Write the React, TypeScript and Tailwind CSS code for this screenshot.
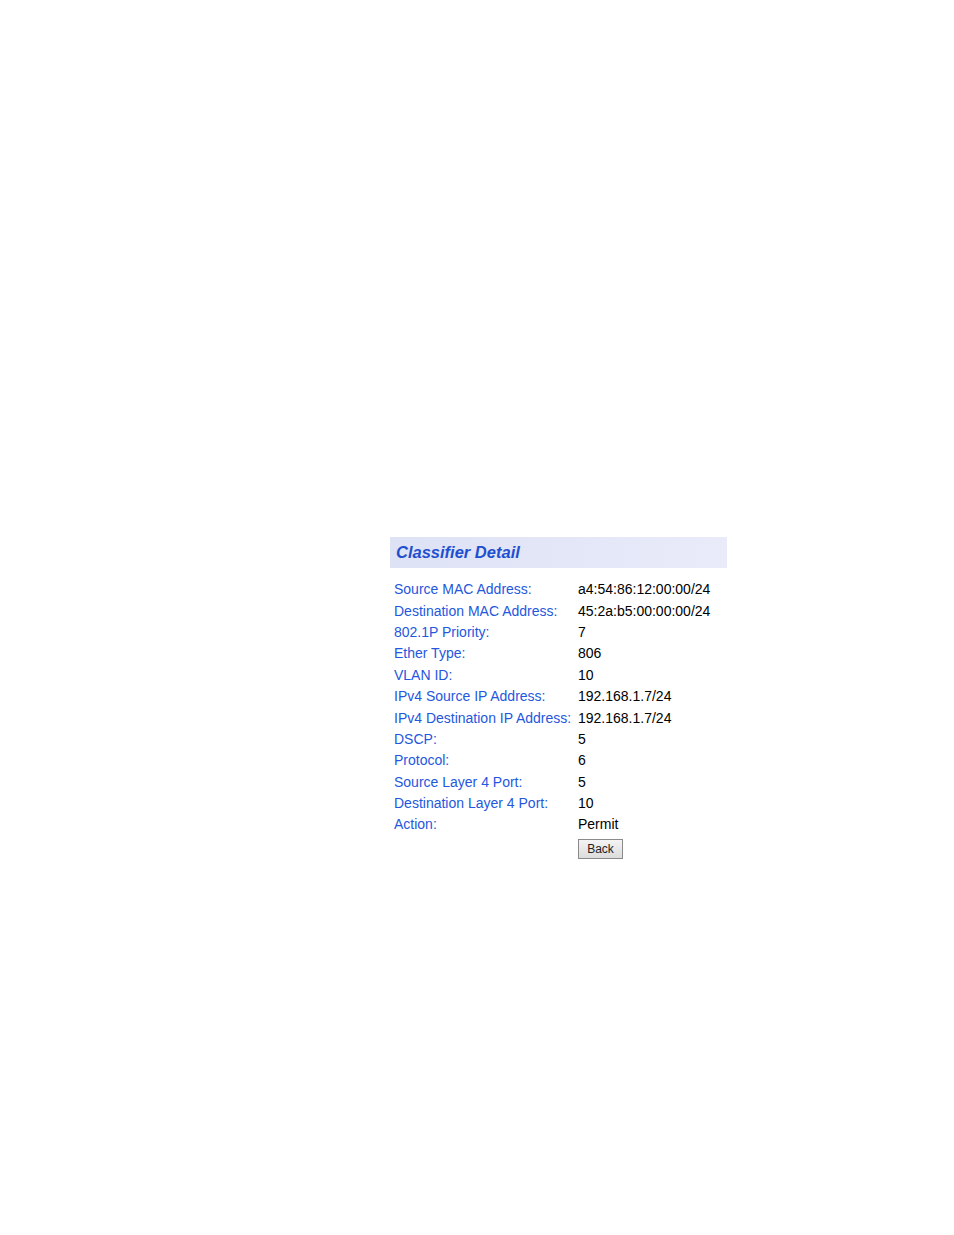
const rows: [string, string][] = [
  ['Source MAC Address:', 'a4:54:86:12:00:00/24'],
  ['Destination MAC Address:', '45:2a:b5:00:00:00/24'],
  ['802.1P Priority:', '7'],
  ['Ether Type:', '806'],
  ['VLAN ID:', '10'],
  ['IPv4 Source IP Address:', '192.168.1.7/24'],
  ['IPv4 Destination IP Address:', '192.168.1.7/24'],
  ['DSCP:', '5'],
  ['Protocol:', '6'],
  ['Source Layer 4 Port:', '5'],
  ['Destination Layer 4 Port:', '10'],
  ['Action:', 'Permit'],
];

export default function App() {
  return (
    <div className="min-h-[1235px] w-[954px] bg-white pt-[537px] pl-[390px] font-['Liberation_Sans',Arial,sans-serif]">
      <div className="w-[337px]">
        <div className="flex h-[31px] items-center bg-gradient-to-r from-[#dde2f5] to-[#e9ebf9] pl-[6px]">
          <span className="text-[16.5px] font-bold italic text-[#1f4fd0]">Classifier Detail</span>
        </div>
        <div className="mt-[11px] pl-[4px]">
          {rows.map(([label, value]) => (
            <div key={label} className="flex h-[21.4px] items-center text-[14px]">
              <span className="w-[184px] shrink-0 text-[#2457de]">{label}</span>
              <span className="text-black">{value}</span>
            </div>
          ))}
          <div className="mt-[3px] pl-[184px]">
            <button className="flex h-[20px] w-[45px] items-center justify-center border border-[#8a8a8a] bg-gradient-to-b from-[#f4f4f4] to-[#dcdcdc] text-[12px] text-[#222]">
              Back
            </button>
          </div>
        </div>
      </div>
    </div>
  );
}
